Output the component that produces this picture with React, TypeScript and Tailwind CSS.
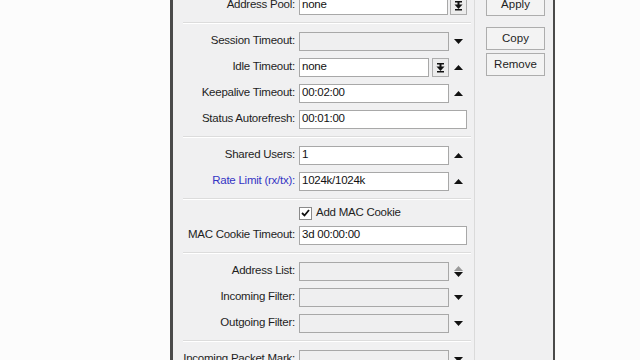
import React from "react"

const font = { fontFamily: '"Liberation Sans", Arial, sans-serif' }

function Up({ gray }: { gray?: boolean }) {
  return (
    <svg width="9" height="5" viewBox="0 0 9 5">
      <polygon points="0,5 9,5 4.5,0" fill={gray ? "#9a9a9a" : "#111"} />
    </svg>
  )
}

function Down() {
  return (
    <svg width="9" height="5" viewBox="0 0 9 5">
      <polygon points="0,0 9,0 4.5,5" fill="#111" />
    </svg>
  )
}

function DropBtn() {
  return (
    <div className="w-[17px] h-[19px] border border-[#adadad] bg-[#ececec] flex items-center justify-center">
      <svg width="9" height="11" viewBox="0 0 9 11">
        <rect x="1" y="1" width="7" height="1.5" fill="#111" />
        <rect x="3.5" y="2" width="2" height="3" fill="#111" />
        <polygon points="0.5,4.5 8.5,4.5 4.5,9" fill="#111" />
        <rect x="1" y="9" width="7" height="1.5" fill="#111" />
      </svg>
    </div>
  )
}

type RowProps = {
  label: string
  value?: string
  disabled?: boolean
  wide?: boolean
  icon?: "up" | "down" | "updown"
  drop?: "pool" | "idle"
  blue?: boolean
}

function Row({ label, value = "", disabled, wide, icon, drop, blue }: RowProps) {
  const w = wide ? "w-[168px]" : drop === "idle" ? "w-[130px]" : drop === "pool" ? "w-[149px]" : "w-[150px]"
  return (
    <div className="h-[26px] shrink-0 flex items-center">
      <div
        className={`w-[122px] whitespace-nowrap text-right text-[11.5px] tracking-[-0.25px] ${
          blue ? "text-[#3434c4]" : "text-[#1e1e1e]"
        }`}
      >
        {label}:
      </div>
      <div
        className={`ml-[4px] ${w} h-[19px] border border-[#a8a8a8] flex items-center pl-[2px] text-[11.5px] tracking-[-0.25px] text-[#111] ${
          disabled ? "bg-[#efeff0]" : "bg-white"
        }`}
      >
        {value}
      </div>
      {drop === "idle" && (
        <div className="ml-[3px]">
          <DropBtn />
        </div>
      )}
      {drop === "pool" && (
        <div className="ml-[2px]">
          <DropBtn />
        </div>
      )}
      {!wide && drop !== "pool" && (
        <div className="w-[18px] flex flex-col items-center justify-center gap-[1px]">
          {icon === "up" && <Up />}
          {icon === "down" && <Down />}
          {icon === "updown" && (
            <>
              <Up gray />
              <Down />
            </>
          )}
        </div>
      )}
    </div>
  )
}

function Sep() {
  return <div className="shrink-0 my-[4px] ml-[10px] mr-[3px] h-px bg-[#dcdcdc] border-b border-white box-content" />
}

function Btn({ children }: { children: React.ReactNode }) {
  return (
    <div className="shrink-0 w-[59px] h-[23px] border border-[#adadad] bg-[#f3f3f3] flex items-center justify-center text-[11.5px] text-[#1e1e1e]">
      {children}
    </div>
  )
}

export default function App() {
  return (
    <div className="w-[640px] h-[360px] bg-[#fcfcfc] flex overflow-hidden" style={font}>
      <div className="w-[170px] shrink-0" />

      <div className="w-[385px] shrink-0 h-full bg-[#f0f0f1] border-l-[3px] border-r-[2px] border-[#4a4a4a] flex">
        {/* form */}
        <div className="w-[302px] shrink-0 border-r border-[#dadada] flex flex-col -mt-[8px]">
          <Row label="Address Pool" value="none" drop="pool" />
          <Sep />
          <Row label="Session Timeout" disabled icon="down" />
          <Row label="Idle Timeout" value="none" drop="idle" icon="up" />
          <Row label="Keepalive Timeout" value="00:02:00" icon="up" />
          <Row label="Status Autorefresh" value="00:01:00" wide />
          <Sep />
          <Row label="Shared Users" value="1" icon="up" />
          <Row label="Rate Limit (rx/tx)" value="1024k/1024k" icon="up" blue />
          <Sep />
          <div className="h-[18px] shrink-0 flex items-center pl-[126px]">
            <div className="w-[13px] h-[13px] border border-[#8a8a8a] bg-white flex items-center justify-center">
              <svg width="9" height="8" viewBox="0 0 9 8">
                <polyline points="1,4 3.5,6.5 8,1" fill="none" stroke="#111" strokeWidth="1.8" />
              </svg>
            </div>
            <span className="ml-[4px] text-[11.5px] tracking-[-0.25px] text-[#1e1e1e]">Add MAC Cookie</span>
          </div>
          <Row label="MAC Cookie Timeout" value="3d 00:00:00" wide />
          <Sep />
          <Row label="Address List" disabled icon="updown" />
          <Row label="Incoming Filter" disabled icon="down" />
          <Row label="Outgoing Filter" disabled icon="down" />
          <Sep />
          <Row label="Incoming Packet Mark" disabled icon="down" />
        </div>

        {/* buttons */}
        <div className="flex-1 flex flex-col pl-[11px] -mt-[7px]">
          <Btn>Apply</Btn>
          <div className="mt-[11px] flex flex-col gap-[3px]">
            <Btn>Copy</Btn>
            <Btn>Remove</Btn>
          </div>
        </div>
      </div>

      <div className="flex-1" />
    </div>
  )
}
